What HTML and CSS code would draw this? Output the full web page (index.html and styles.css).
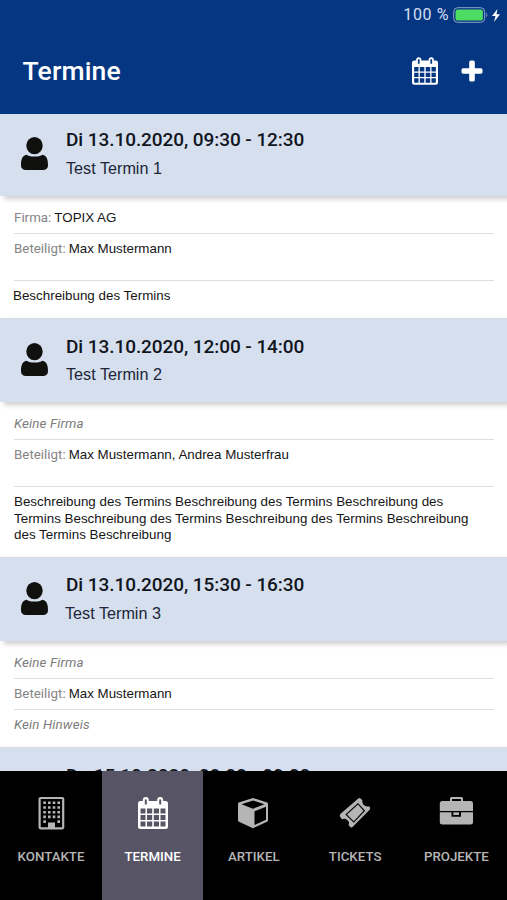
FILE: index.html
```html
<!DOCTYPE html>
<html lang="de">
<head>
<meta charset="utf-8">
<title>Termine</title>
<link rel="stylesheet" href="styles.css">
</head>
<body>
<svg class="defs" width="0" height="0">
  <symbol id="person" viewBox="0 0 27 33">
    <path d="M5.300 17.800C1.500 18.800 0 22 0 28.300 0 31 1.600 33 4.200 33H22.800C25.400 33 27 31 27 28.300 27 22 25.500 18.800 21.700 17.800 19.500 19.200 16.800 19.600 13.500 19.600S7.500 19.200 5.300 17.800Z"/>
    <ellipse cx="13.500" cy="8.600" rx="8.200" ry="8.600"/>
  </symbol>
  <symbol id="calendar" viewBox="0 0 30 32">
    <path fill-rule="evenodd" d="M2.500 4H4.800V3A3 3 0 0 1 10.800 3V4H19.200V3A3 3 0 0 1 25.200 3V4H27.500Q30 4 30 6.500V29.500Q30 32 27.500 32H2.500Q0 32 0 29.500V6.500Q0 4 2.500 4ZM6.800 2.500V7.500H8.800V2.500ZM21.200 2.500V7.500H23.200V2.500ZM2.500 11.500V16.500H7.500V11.500ZM9 11.500V16.500H14.200V11.500ZM15.800 11.500V16.500H21V11.500ZM22.500 11.500V16.500H27.500V11.500ZM2.500 18V23H7.500V18ZM9 18V23H14.200V18ZM15.800 18V23H21V18ZM22.500 18V23H27.500V18ZM2.500 24.500V29.500H7.500V24.500ZM9 24.500V29.500H14.200V24.500ZM15.800 24.500V29.500H21V24.500ZM22.500 24.500V29.500H27.500V24.500Z"/>
  </symbol>
</svg>
<main class="app">
  <header class="header">
    <div class="status">
      <span class="percent">100 %</span>
      <svg class="battery" width="36" height="16" viewBox="0 0 36 16">
        <rect x=".7" y=".7" width="31" height="14.600" rx="4" fill="none" stroke="#8fa5cb" stroke-width="1"/>
        <rect x="2.500" y="2.500" width="27.400" height="11" rx="2" fill="#4cdc62"/>
        <path d="M33.300 5.500Q35.300 8 33.300 10.500Z" fill="#8fa5cb"/>
      </svg>
      <svg class="bolt" width="8" height="13" viewBox="0 0 8 13"><path d="M5.500 0 0 7H3.500L2 13 8 5.200H4.500Z" fill="#fff"/></svg>
    </div>
    <div class="titlebar">
      <h1 class="title">Termine</h1>
      <svg class="action-calendar" width="26" height="28"><use href="#calendar"/></svg>
      <svg class="action-add" width="22" height="22" viewBox="0 0 22 22"><path d="M11 .5H12Q13.800 .5 13.800 2V8.200H20Q21.500 8.200 21.500 10V12Q21.500 13.800 20 13.800H13.800V20Q13.800 21.500 12 21.500H10Q8.200 21.500 8.200 20V13.800H2Q.5 13.800 .5 12V10Q.5 8.200 2 8.200H8.200V2Q8.200 .5 10 .5Z" fill="#fff"/></svg>
    </div>
  </header>
  <section class="list">
    <article class="card first">
      <div class="head"><svg class="person"><use href="#person"/></svg>
        <div><h2 class="date">Di 13.10.2020, 09:30 - 12:30</h2><p class="subject">Test Termin 1</p></div></div>
      <div class="body">
        <div class="row"><span class="label">Firma:</span><span class="value">TOPIX AG</span></div>
        <div class="row tall"><span class="label">Beteiligt:</span><span class="value">Max Mustermann</span></div>
        <p class="description short">Beschreibung des Termins</p>
      </div>
    </article>
    <article class="card">
      <div class="head"><svg class="person"><use href="#person"/></svg>
        <div><h2 class="date">Di 13.10.2020, 12:00 - 14:00</h2><p class="subject">Test Termin 2</p></div></div>
      <div class="body">
        <div class="row"><em class="empty">Keine Firma</em></div>
        <div class="row tall"><span class="label">Beteiligt:</span><span class="value">Max Mustermann, Andrea Musterfrau</span></div>
        <p class="description long">Beschreibung des Termins Beschreibung des Termins Beschreibung des<br>Termins Beschreibung des Termins Beschreibung des Termins Beschreibung<br>des Termins Beschreibung</p>
      </div>
    </article>
    <article class="card third">
      <div class="head"><svg class="person"><use href="#person"/></svg>
        <div><h2 class="date">Di 13.10.2020, 15:30 - 16:30</h2><p class="subject">Test Termin 3</p></div></div>
      <div class="body">
        <div class="row"><em class="empty">Keine Firma</em></div>
        <div class="row slim"><span class="label">Beteiligt:</span><span class="value">Max Mustermann</span></div>
        <div class="note"><em class="empty">Kein Hinweis</em></div>
      </div>
    </article>
    <article class="card">
      <div class="head"><svg class="person"><use href="#person"/></svg>
        <div><h2 class="date">Do 15.10.2020, 08:00 - 09:00</h2></div></div>
    </article>
  </section>
  <nav class="tabs">
    <a class="tab">
      <svg class="icon" width="34" height="34" viewBox="0 0 34 34">
        <rect x="5.600" y="2" width="23.600" height="30.300" rx="1" fill="none" stroke="currentColor" stroke-width="2.200"/>
        <path d="M9.300 6.800H26M9.300 11.500H26M9.300 16.200H26M9.300 20.900H26" stroke="currentColor" stroke-width="2.600" stroke-dasharray="2.600 2.100"/>
        <path d="M9.300 24.300H11.900V26.900H9.300ZM23.400 24.300H26V26.900H23.400ZM14 26.500H21V32H14Z"/>
      </svg><span>KONTAKTE</span></a>
    <a class="tab active"><svg class="icon" width="30" height="34" viewBox="0 -1 30 34"><use href="#calendar" width="30" height="32"/></svg><span>TERMINE</span></a>
    <a class="tab">
      <svg class="icon" width="34" height="34" viewBox="0 0 34 34">
        <path fill-rule="evenodd" d="M16 2 30.200 6.600Q31 7 31 8.200V24.200Q31 25.200 30 25.700L16 32.200 2 25.700Q1 25.200 1 24.200V8.200Q1 7 1.800 6.600ZM16 4.400 4.500 8.200 16 12.700 27.500 8.200ZM17.500 15.200V29L29 23.700V10.700Z"/>
      </svg><span>ARTIKEL</span></a>
    <a class="tab">
      <svg class="icon" width="34" height="34" viewBox="0 0 34 34">
        <path fill-rule="evenodd" d="M2.600 17.800 20.300 2.500Q21.500 1.500 22.600 2.600L24.400 4.500Q24 8 26.500 9.500 28.700 11 31.400 10.300L32 11.800Q32.400 13 31.400 14L14.800 30.800Q13.500 32 12.300 30.900L10.600 29.200Q11.800 26.300 9.500 24.200 7.200 22.100 4 23.300L2.200 21Q1 19.200 2.600 17.800ZM7.400 18.400 15.800 26.800 27.200 14.700 20 7Z"/>
        <path d="M9 18.400 20 8.500 25.500 14.700 15.800 25.200Z"/>
      </svg><span>TICKETS</span></a>
    <a class="tab">
      <svg class="icon" width="34" height="34" viewBox="0 0 34 34">
        <path fill-rule="evenodd" d="M11 5V2.500Q11 1 12.500 1H22.500Q24 1 24 2.500V5H31.500Q34 5 34 7.500V15H.8V7.500Q.8 5 3.300 5ZM13 3V5H22V3Z"/>
        <path d="M.8 16.300H12.500V20.800H22V16.300H34V26Q34 28.500 31.500 28.500H3.300Q.8 28.500 .8 26Z"/>
        <path d="M14.300 16.300H20V19H14.300Z"/>
      </svg><span>PROJEKTE</span></a>
  </nav>
</main>
</body>
</html>
```

FILE: styles.css
```css
* { box-sizing: border-box; }
body { margin: 0; background: #fff; font-family: Roboto, sans-serif; }
h1, h2, p { margin: 0; }
.defs { position: absolute; }
.app { display: flex; flex-direction: column; width: 507px; height: 900px; overflow: hidden; }

.header { flex: 0 0 114px; background: #053682; color: #fff; }
.status { display: flex; justify-content: flex-end; align-items: center; height: 30px; padding-right: 7px; }
.percent { font-size: 16px; line-height: 20px; letter-spacing: .6px; color: #d5dff0; margin-right: 4px; }
.bolt { margin-left: 3px; }
.titlebar { display: flex; align-items: center; height: 82px; padding: 0 24px 0 22.500px; }
.title { flex: 1; font-size: 26.500px; line-height: 32px; font-weight: 500; letter-spacing: .15px; }
.action-calendar { fill: #fff; margin-right: 23px; }

.list { flex: 1; min-height: 0; overflow: hidden; background: #fff; }
.first { margin-top: -2px; }
.head { display: flex; height: 84px; padding: 17px 0 0 21px; background: #d6dfee; border-top: 1px solid #d8dadf; box-shadow: 4px 3px 5px rgba(0, 0, 0, .2); }
.person { width: 27px; height: 33px; margin: 7px 18px 0 0; fill: #10110f; }
.date { font-size: 19px; line-height: 22px; font-weight: 500; letter-spacing: -.07px; color: #11151d; }
.subject { margin-top: 5px; font: 16.200px/22px "Liberation Sans", sans-serif; color: #202638; }
.first .date, .third .date { margin-top: -1px; }
.first .subject, .third .subject { margin-top: 6px; }
.third .subject { margin-left: -1px; }

.row, .note { display: flex; height: 38px; margin: 0 13px 0 14px; padding-top: 13px; border-bottom: 1px solid #dedede; font-size: 13.350px; line-height: 18px; }
.row.tall { height: 47px; padding-top: 6px; }
.row.slim { height: 31px; padding-top: 6px; }
.note { height: 37px; padding-top: 6px; border: 0; }
.label { color: #858585; margin-right: 3px; }
.value, .description { font-family: "Liberation Sans", sans-serif; color: #161616; }
.empty { color: #7c7c7c; letter-spacing: .12px; }
.description { padding: 7px 0 0 14px; font-size: 13.380px; line-height: 16.500px; white-space: nowrap; }
.description.short { height: 37px; padding-left: 13px; }
.description.long { height: 70px; }

.tabs { position: relative; display: flex; flex: 0 0 129px; background: #000; }
.tab { display: flex; flex: 1; flex-direction: column; align-items: center; padding-top: 25px; color: #b5b5b5; fill: currentColor; font-size: 13.300px; line-height: 18px; font-weight: 500; }
.tab span { margin-top: 18px; }
.tab:first-child { flex: 0 0 102px; }
.tab.active { background: #575565; color: #fff; }
.icon { height: 34px; }
```
